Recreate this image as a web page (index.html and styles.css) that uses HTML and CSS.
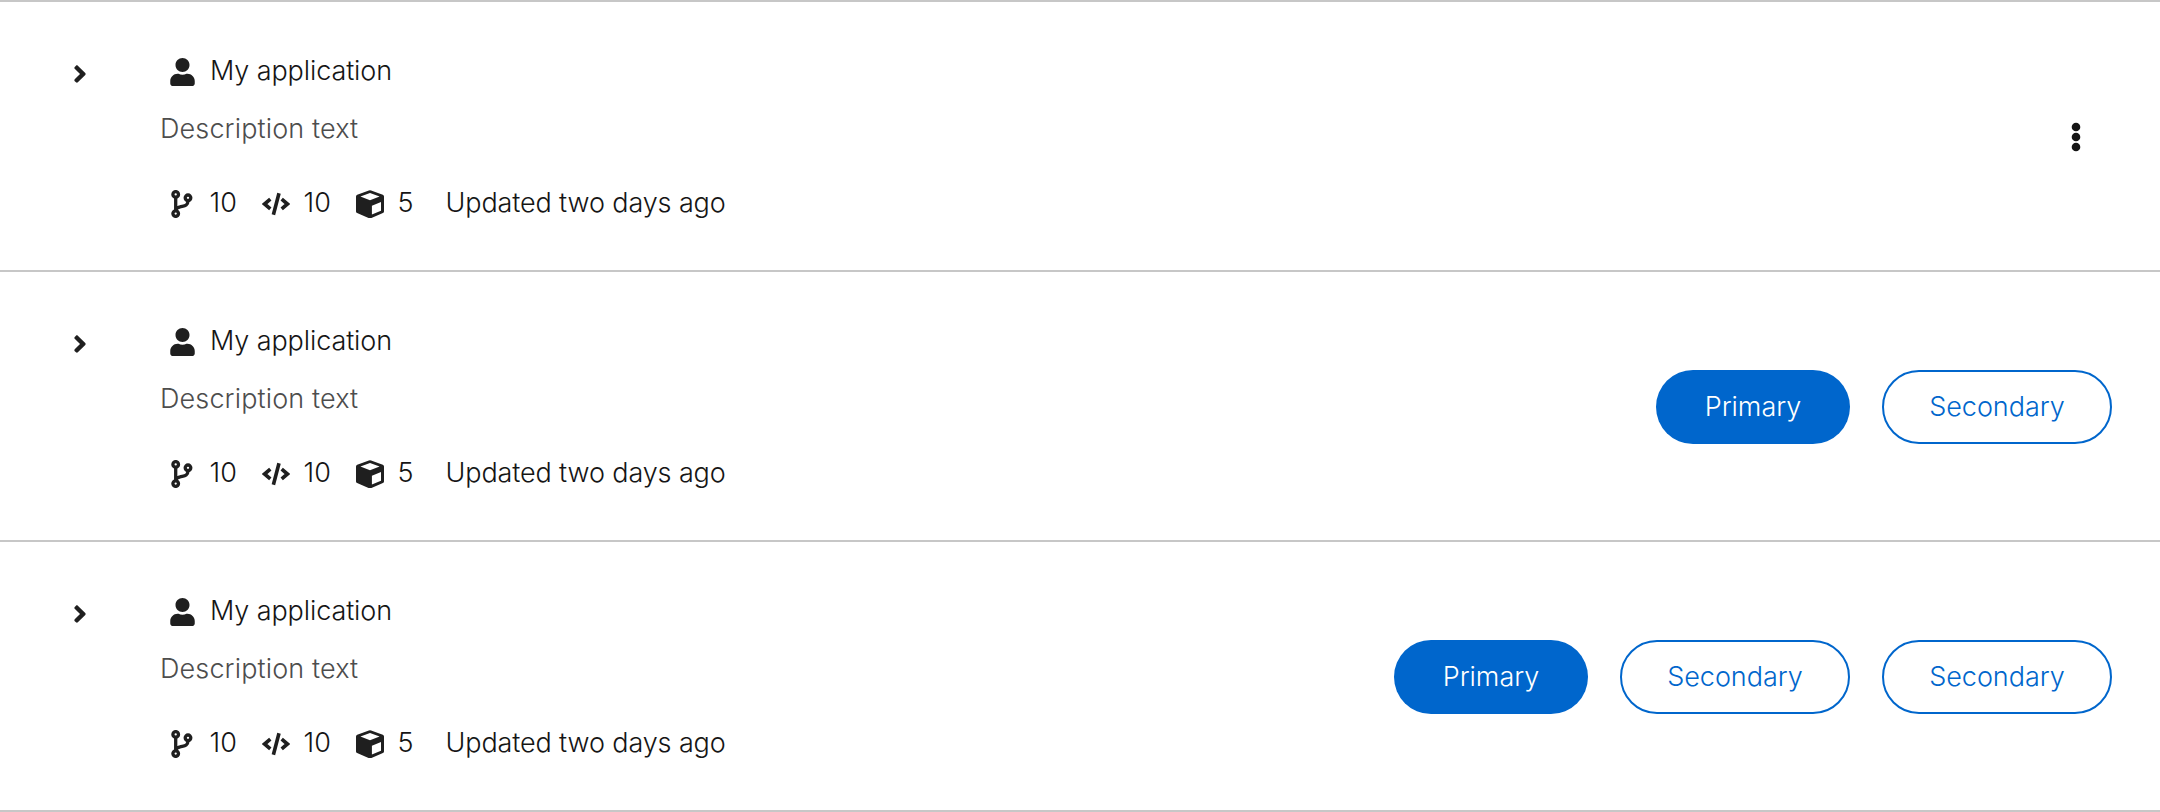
FILE: index.html
```html
<!DOCTYPE html>
<html lang="en">
<head>
<meta charset="utf-8">
<title>Applications</title>
<link rel="stylesheet" href="styles.css">
</head>
<body>
<svg class="sprite" aria-hidden="true">
  <symbol id="angle" viewBox="0 0 256 512"><path d="M224.3 273l-136 136c-9.4 9.4-24.6 9.4-33.9 0l-22.6-22.6c-9.4-9.4-9.4-24.6 0-33.9l96.4-96.4-96.4-96.4c-9.4-9.4-9.4-24.6 0-33.9L54.3 103c9.4-9.4 24.6-9.4 33.9 0l136 136c9.5 9.4 9.5 24.6.1 34z"/></symbol>
  <symbol id="user" viewBox="0 0 448 512"><path d="M224 256c70.7 0 128-57.3 128-128S294.7 0 224 0 96 57.3 96 128s57.300 128 128 128zm89.600 32h-16.700c-22.200 10.200-46.900 16-72.900 16s-50.600-5.800-72.900-16h-16.700C60.200 288 0 348.200 0 422.400V464c0 26.500 21.500 48 48 48h352c26.500 0 48-21.500 48-48v-41.600c0-74.200-60.200-134.400-134.400-134.400z"/></symbol>
  <symbol id="branch" viewBox="0 0 28 28"><g fill="none" stroke="currentColor" stroke-width="3.3"><circle cx="7.700" cy="4.400" r="2.800"/><circle cx="20" cy="7.800" r="2.800"/><circle cx="7.700" cy="23.600" r="2.800"/><path d="M7.700 7v14M20 10.500c0 6-4.500 5.300-8 6.400-2.500.7-3.600 1.300-4 3.100"/></g></symbol>
  <symbol id="code" viewBox="0 0 28 28"><g fill="none" stroke="currentColor" stroke-width="3.600"><path d="M8.300 9.200L2.600 14l5.700 4.800M19.700 9.200l5.700 4.800-5.700 4.800M17 3.200l-5.600 21.600"/></g></symbol>
  <symbol id="cube" viewBox="0 0 28 28"><path fill-rule="evenodd" d="M12.900.4a3 3 0 0 1 2.200 0l11.700 4.300c.8.300 1.200.9 1.200 1.700v15c0 .8-.4 1.400-1.100 1.700l-11.700 5a3 3 0 0 1-2.400 0l-11.700-5C.4 22.800 0 22.200 0 21.400v-15c0-.8.400-1.400 1.200-1.700zM14 3L4.400 6.500 14 10.300l9.600-3.800zM15.900 15.700v8.800l9.100-3.800v-8.800z"/></symbol>
  <symbol id="kebab" viewBox="0 0 12 30"><circle cx="6" cy="5" r="4.300"/><circle cx="6" cy="15" r="4.300"/><circle cx="6" cy="25" r="4.300"/></symbol>
</svg>
<ul class="list">
  <li class="row">
    <button class="toggle" aria-label="Expand"><svg class="icon-angle"><use href="#angle"/></svg></button>
    <div class="content">
      <div class="title"><svg class="icon-user"><use href="#user"/></svg><span class="name">My application</span></div>
      <p class="description">Description text</p>
      <div class="meta">
        <span class="stat"><svg class="icon"><use href="#branch"/></svg>10</span>
        <span class="stat"><svg class="icon"><use href="#code"/></svg>10</span>
        <span class="stat"><svg class="icon"><use href="#cube"/></svg>5</span>
        <span class="updated">Updated two days ago</span>
      </div>
    </div>
    <div class="actions"><button class="menu" aria-label="Actions"><svg class="icon-kebab"><use href="#kebab"/></svg></button></div>
  </li>
  <li class="row">
    <button class="toggle" aria-label="Expand"><svg class="icon-angle"><use href="#angle"/></svg></button>
    <div class="content">
      <div class="title"><svg class="icon-user"><use href="#user"/></svg><span class="name">My application</span></div>
      <p class="description">Description text</p>
      <div class="meta">
        <span class="stat"><svg class="icon"><use href="#branch"/></svg>10</span>
        <span class="stat"><svg class="icon"><use href="#code"/></svg>10</span>
        <span class="stat"><svg class="icon"><use href="#cube"/></svg>5</span>
        <span class="updated">Updated two days ago</span>
      </div>
    </div>
    <div class="actions"><button class="button primary">Primary</button><button class="button secondary">Secondary</button></div>
  </li>
  <li class="row">
    <button class="toggle" aria-label="Expand"><svg class="icon-angle"><use href="#angle"/></svg></button>
    <div class="content">
      <div class="title"><svg class="icon-user"><use href="#user"/></svg><span class="name">My application</span></div>
      <p class="description">Description text</p>
      <div class="meta">
        <span class="stat"><svg class="icon"><use href="#branch"/></svg>10</span>
        <span class="stat"><svg class="icon"><use href="#code"/></svg>10</span>
        <span class="stat"><svg class="icon"><use href="#cube"/></svg>5</span>
        <span class="updated">Updated two days ago</span>
      </div>
    </div>
    <div class="actions"><button class="button primary">Primary</button><button class="button secondary">Secondary</button><button class="button secondary">Secondary</button></div>
  </li>
</ul>
</body>
</html>
```
FILE: styles.css
```css
* { box-sizing: border-box; }
body { margin: 0; background: #fff; color: #151515; font: 300 27px/42px Inter, sans-serif; }
.sprite { display: none; }
svg { display: block; flex: none; fill: currentColor; }
button { padding: 0; border: 0; background: none; color: inherit; font: inherit; }
.list { margin: 0; padding: 0; list-style: none; border-top: 2px solid #c7c7c7; }
.row { display: flex; height: 270px; padding: 48px 48px 0 48px; border-bottom: 2px solid #c7c7c7; }
.toggle { width: 63px; height: 47px; display: flex; align-items: center; justify-content: center; color: #1f1f1f; }
.icon-angle { width: 14px; height: 28px; }
.content { flex: 1; margin-left: 49px; }
.title { display: flex; align-items: center; height: 42px; padding-left: 10px; gap: 15px; }
.icon-user { width: 25px; height: 28px; margin-top: 2px; color: #1f1f1f; }
.name { letter-spacing: -0.1px; }
.description { margin: 16px 0 0; color: #4d4d4d; letter-spacing: 0.13px; }
.meta { display: flex; align-items: center; height: 42px; margin-top: 32px; padding-left: 8px; }
.stat { display: flex; align-items: center; gap: 13.5px; width: 94px; }
.stat:nth-child(3) { width: 89.5px; }
.icon { width: 28px; height: 28px; margin-top: 2px; color: #1f1f1f; }
.updated { letter-spacing: -0.12px; }
.actions { display: flex; align-items: center; align-self: flex-start; height: 174px; gap: 32px; }
.button { height: 74px; border-radius: 37px; letter-spacing: -0.05px; }
.primary { width: 194px; background: #06c; color: #fff; }
.secondary { width: 230px; border: 2px solid #06c; color: #06c; }
.menu { width: 73px; height: 74px; display: flex; align-items: center; justify-content: center; }
.icon-kebab { width: 12px; height: 30px; }
```
